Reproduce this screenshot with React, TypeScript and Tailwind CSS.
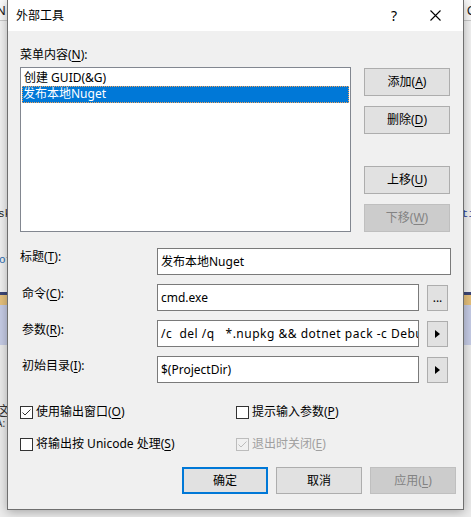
import React from "react";

const font = "font-['Segoe_UI','Noto_Sans','Noto_Sans_CJK_SC',sans-serif]";

function Mn({ children }: { children: React.ReactNode }) {
  // mnemonic letter, underlined like a Win32 dialog
  return <span className="underline underline-offset-[2px] decoration-[1px]">{children}</span>;
}

function Btn({
  children,
  disabled,
  primary,
  className = "",
}: {
  children: React.ReactNode;
  disabled?: boolean;
  primary?: boolean;
  className?: string;
}) {
  const look = disabled
    ? "bg-[#cccccc] border border-[#bfbfbf] text-[#838383]"
    : primary
    ? "bg-[#e1e1e1] border-2 border-[#0078d7] text-black"
    : "bg-[#e1e1e1] border border-[#adadad] text-black";
  return (
    <div className={`flex items-center justify-center text-[12px] leading-[16px] ${look} ${className}`}>
      {children}
    </div>
  );
}

function Check({ checked, disabled }: { checked?: boolean; disabled?: boolean }) {
  const c = disabled ? "#bcbcbc" : "#333333";
  return (
    <div
      className={`w-[13px] h-[13px] shrink-0 border ${
        disabled ? "border-[#bcbcbc] bg-[#f0f0f0]" : "border-[#333333] bg-white"
      } flex items-center justify-center`}
    >
      {checked && (
        <svg width="11" height="11" viewBox="0 0 11 11">
          <polyline points="1.5,5.5 4,8 9.5,2.5" fill="none" stroke={c} strokeWidth="1" />
        </svg>
      )}
    </div>
  );
}

function CheckRow({
  checked,
  disabled,
  children,
}: {
  checked?: boolean;
  disabled?: boolean;
  children: React.ReactNode;
}) {
  return (
    <div className={`flex items-center gap-[3px] ${disabled ? "text-[#a0a0a0]" : "text-black"}`}>
      <Check checked={checked} disabled={disabled} />
      <span className="text-[12px] leading-[16px] whitespace-nowrap">{children}</span>
    </div>
  );
}

function Field({ children, wide, className = "" }: { children: React.ReactNode; wide?: boolean; className?: string }) {
  return (
    <div
      className={`h-[27px] ${wide ? "w-[294px]" : "w-[262px]"} bg-white border border-[#7a7a7a] flex items-center pl-[3px] overflow-hidden`}
    >
      <span className={`text-[12px] leading-[16px] whitespace-pre text-black ${className}`}>{children}</span>
    </div>
  );
}

function Arrow() {
  return (
    <svg width="5" height="8" viewBox="0 0 5 8">
      <polygon points="0,0 5,4 0,8" fill="#000" />
    </svg>
  );
}

export default function App() {
  return (
    <div className={`relative w-[471px] h-[517px] overflow-hidden bg-[#ececec] ${font}`}>
      {/* the IDE window behind the dialog */}
      <div className="flex flex-col text-[12px] leading-[16px]">
        <div className="h-[20px] bg-[#fafafa] flex justify-between items-center">
          <span className="text-[#222] ml-[-4px] text-[13px]">N</span>
          <span className="text-[#222] mr-[-4px] text-[13px]">C</span>
        </div>
        <div className="h-[1px] bg-[#c9c9c9]" />
        <div className="h-[271px] bg-[#f2f2f2] flex flex-col justify-end pb-[24px]">
          <div className="flex justify-between font-['Liberation_Mono',monospace] text-[11px]">
            <span className="text-[#1e1e1e] ml-[-2px]">sk</span>
            <span className="text-[#2b3fa0] mr-[-4px]">ti</span>
          </div>
          <div className="mt-[30px] font-['Liberation_Mono',monospace] text-[11px] text-[#2b6cb0] ml-[-1px]">ot</div>
        </div>
        <div className="h-[3px] bg-[#3c4676]" />
        <div className="h-[10px] bg-[#e6c17c]" />
        <div className="h-[40px] bg-[#c6cce6]" />
        <div className="h-[58px] bg-[#ececec]" />
        <div className="flex flex-col gap-[1px] text-[#333] ml-[-4px]">
          <span className="text-[13px] leading-[14px]">这</span>
          <span className="text-[10px] leading-[11px]">A:</span>
        </div>
      </div>

      {/* dialog: a window over the IDE */}
      <div className="absolute left-[7px] top-0 w-[457px] h-[510px] flex flex-col border-x border-b border-[#6f6f6f] bg-[#f0f0f0] shadow-[0_2px_10px_rgba(0,0,0,0.3)]">
        <div className="h-[31px] bg-white flex items-center shrink-0">
          <span className="ml-[8px] text-[12px] leading-[16px] text-black">外部工具</span>
          <span className="ml-auto mr-[33px] text-[14px] leading-[16px] text-black">?</span>
          <svg width="11" height="11" viewBox="0 0 11 11" className="mr-[22px]">
            <path d="M0.5 0.5 L10.5 10.5 M10.5 0.5 L0.5 10.5" stroke="#000" strokeWidth="1.1" />
          </svg>
        </div>

        <div className="flex flex-col pl-[12px] pr-[12px]">
          <div className="mt-[16px] text-[12px] leading-[16px] text-black">
            菜单内容(<Mn>N</Mn>):
          </div>

          <div className="flex mt-[4px]">
            <div className="w-[331px] h-[165px] bg-white border border-[#828790] px-[1px] pt-[2px]">
              <div className="h-[16px] pl-[2px] text-[12px] leading-[16px] text-black whitespace-nowrap">
                创建 GUID(&amp;G)
              </div>
              <div className="h-[17px] pl-[1px] bg-[#0078d7] outline-1 outline-dotted outline-[#f2a35c] -outline-offset-1 text-[12px] leading-[16px] text-white whitespace-nowrap">
                发布本地Nuget
              </div>
            </div>
            <div className="ml-[13px] mt-[1px] flex flex-col">
              <Btn className="w-[86px] h-[28px]">
                添加(<Mn>A</Mn>)
              </Btn>
              <Btn className="w-[86px] h-[28px] mt-[10px]">
                删除(<Mn>D</Mn>)
              </Btn>
              <Btn className="w-[86px] h-[28px] mt-[32px]">
                上移(<Mn>U</Mn>)
              </Btn>
              <Btn disabled className="w-[86px] h-[28px] mt-[10px]">
                下移(<Mn>W</Mn>)
              </Btn>
            </div>
          </div>

          <div className="mt-[16px] grid grid-cols-[137px_auto] gap-y-[9px] text-[12px] leading-[16px] text-black">
            <div className="mt-[1px]">
              标题(<Mn>T</Mn>):
            </div>
            <Field wide>发布本地Nuget</Field>

            <div className="mt-[2px] pl-[2px]">
              命令(<Mn>C</Mn>):
            </div>
            <div className="flex gap-[8px]">
              <Field>cmd.exe</Field>
              <Btn className="w-[21px] h-[26px] mt-[1px]">...</Btn>
            </div>

            <div className="mt-[2px] pl-[2px]">
              参数(<Mn>R</Mn>):
            </div>
            <div className="flex gap-[8px]">
              <Field className="tracking-[0.5px]">{"/c  del /q   *.nupkg && dotnet pack -c Debug -o ."}</Field>
              <Btn className="w-[21px] h-[26px] mt-[1px]">
                <Arrow />
              </Btn>
            </div>

            <div className="mt-[2px] pl-[2px]">
              初始目录(<Mn>I</Mn>):
            </div>
            <div className="flex gap-[8px]">
              <Field>$(ProjectDir)</Field>
              <Btn className="w-[21px] h-[26px] mt-[1px]">
                <Arrow />
              </Btn>
            </div>
          </div>

          <div className="mt-[21px] grid grid-cols-[216px_auto] gap-y-[16px]">
            <CheckRow checked>
              使用输出窗口(<Mn>O</Mn>)
            </CheckRow>
            <CheckRow>
              提示输入参数(<Mn>P</Mn>)
            </CheckRow>
            <CheckRow>
              将输出按 Unicode 处理(<Mn>S</Mn>)
            </CheckRow>
            <CheckRow checked disabled>
              退出时关闭(<Mn>E</Mn>)
            </CheckRow>
          </div>
        </div>

        <div className="mt-[15px] flex justify-end gap-[8px] pr-[7px]">
          <Btn primary className="w-[86px] h-[27px]">
            确定
          </Btn>
          <Btn className="w-[86px] h-[27px]">取消</Btn>
          <Btn disabled className="w-[86px] h-[27px]">
            应用(<Mn>L</Mn>)
          </Btn>
        </div>
      </div>
    </div>
  );
}
